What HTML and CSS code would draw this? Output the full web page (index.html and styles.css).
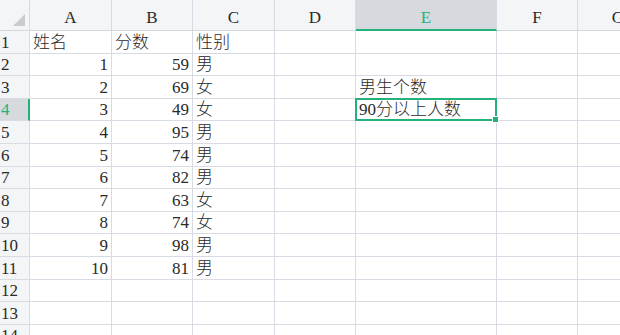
FILE: index.html
```html
<!DOCTYPE html>
<html lang="zh-CN">
<head>
  <meta charset="UTF-8">
  <title>Sheet1</title>
  <link rel="stylesheet" href="styles.css">
</head>
<body>
  <div class="sheet">
    <table class="grid">
      <thead>
        <tr>
          <th class="corner w-rh"><span class="tri"></span></th>
          <th class="w-a">A</th>
          <th class="w-b">B</th>
          <th class="w-c">C</th>
          <th class="w-d">D</th>
          <th class="w-e active">E</th>
          <th class="w-f">F</th>
          <th class="w-g">G</th>
        </tr>
      </thead>
      <tbody>
        <tr><th>1</th><td>姓名</td><td>分数</td><td>性别</td><td></td><td></td><td></td><td></td></tr>
        <tr><th>2</th><td class="num">1</td><td class="num">59</td><td>男</td><td></td><td></td><td></td><td></td></tr>
        <tr><th>3</th><td class="num">2</td><td class="num">69</td><td>女</td><td></td><td>男生个数</td><td></td><td></td></tr>
        <tr><th class="active">4</th><td class="num">3</td><td class="num">49</td><td>女</td><td></td><td class="selected">90分以上人数<span class="handle"></span></td><td></td><td></td></tr>
        <tr><th>5</th><td class="num">4</td><td class="num">95</td><td>男</td><td></td><td></td><td></td><td></td></tr>
        <tr><th>6</th><td class="num">5</td><td class="num">74</td><td>男</td><td></td><td></td><td></td><td></td></tr>
        <tr><th>7</th><td class="num">6</td><td class="num">82</td><td>男</td><td></td><td></td><td></td><td></td></tr>
        <tr><th>8</th><td class="num">7</td><td class="num">63</td><td>女</td><td></td><td></td><td></td><td></td></tr>
        <tr><th>9</th><td class="num">8</td><td class="num">74</td><td>女</td><td></td><td></td><td></td><td></td></tr>
        <tr><th>10</th><td class="num">9</td><td class="num">98</td><td>男</td><td></td><td></td><td></td><td></td></tr>
        <tr><th>11</th><td class="num">10</td><td class="num">81</td><td>男</td><td></td><td></td><td></td><td></td></tr>
        <tr><th>12</th><td></td><td></td><td></td><td></td><td></td><td></td><td></td></tr>
        <tr><th>13</th><td></td><td></td><td></td><td></td><td></td><td></td><td></td></tr>
        <tr><th>14</th><td></td><td></td><td></td><td></td><td></td><td></td><td></td></tr>
      </tbody>
    </table>
  </div>
</body>
</html>
```

FILE: styles.css
```css
html, body {
  margin: 0;
  padding: 0;
  background: #fff;
  overflow: hidden;
}
.sheet {
  width: 620px;
  height: 335px;
  overflow: hidden;
}
.grid {
  table-layout: fixed;
  border-collapse: separate;
  border-spacing: 0;
  width: 659px;
  font-family: "Liberation Serif", "Noto Sans CJK SC", serif;
  font-size: 17px;
  color: #2a2a2a;
}
.grid th, .grid td {
  box-sizing: border-box;
  border-right: 1px solid #d8dbe4;
  border-bottom: 1px solid #d8dbe4;
  padding: 0 3px 0 3px;
  white-space: nowrap;
  line-height: 20px;
  vertical-align: bottom;
  overflow: visible;
}
.grid td {
  font-weight: 300;
}
.grid thead th {
  height: 31px;
  background: #f4f5f7;
  font-weight: normal;
  text-align: center;
  vertical-align: middle;
  padding-top: 6px;
  border-bottom-color: #d3d6df;
}
.grid tbody th {
  background: #f4f5f7;
  font-weight: normal;
  text-align: left;
  padding-left: 1px;
}
.grid tbody tr {
  height: 22.6px;
}
.w-rh { width: 30px; }
.w-a { width: 82px; }
.w-b { width: 81px; }
.w-c { width: 82px; }
.w-d { width: 81px; }
.w-e { width: 141px; }
.w-f { width: 81px; }
.w-g { width: 81px; }

.corner {
  position: relative;
}
.tri {
  position: absolute;
  right: 4px;
  bottom: 4px;
  width: 0;
  height: 0;
  border-left: 12px solid transparent;
  border-bottom: 12px solid #c9cbd0;
}
.grid thead th.active {
  background: #d6d9de;
  color: #23b27a;
  border-bottom: 2px solid #23b27a;
}
.grid tbody th.active {
  background: #d6d9de;
  color: #23b27a;
  border-right: 2px solid #23b27a;
}
.num {
  text-align: right;
}
.grid td.selected {
  position: relative;
}
.grid td.selected::after {
  content: "";
  position: absolute;
  left: -1px;
  top: -1px;
  right: -1px;
  bottom: -1px;
  border: 2px solid #23b27a;
  z-index: 1;
  pointer-events: none;
}
.handle {
  position: absolute;
  right: -3px;
  bottom: -3px;
  width: 5px;
  height: 5px;
  background: #23b27a;
  border: 1px solid #fff;
  z-index: 2;
}
```
